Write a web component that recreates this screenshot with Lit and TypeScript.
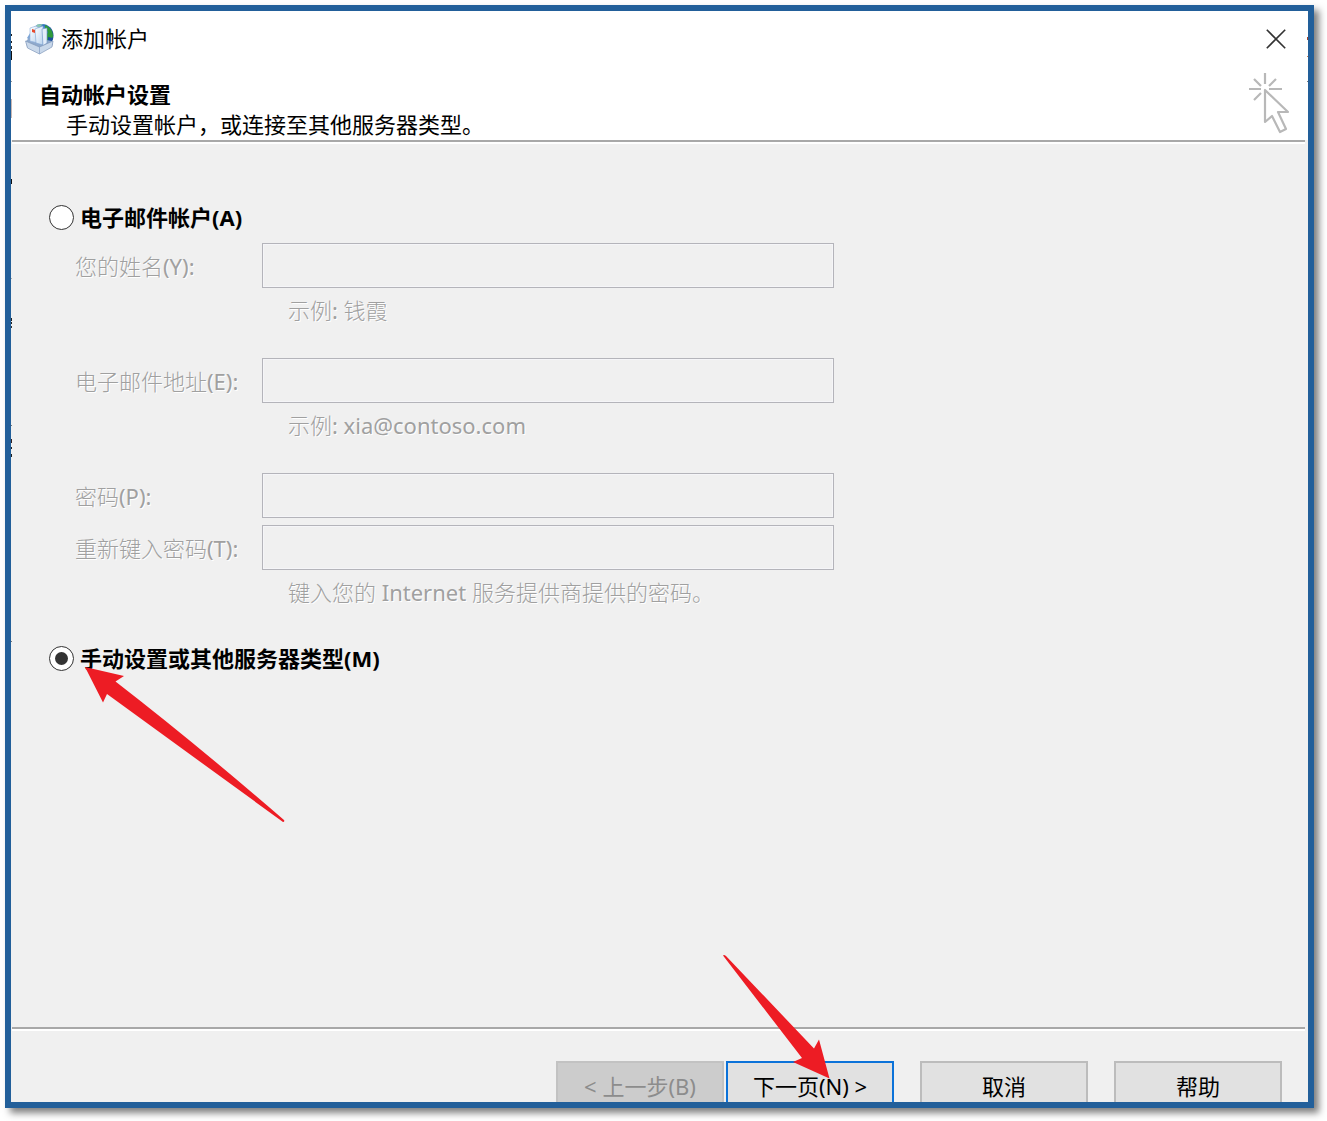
import { LitElement, html, svg, css } from "lit";
import { customElement, state } from "lit/decorators.js";

type Field = { id: string; label: string; type: string; hint?: string };

const FIELDS: Field[] = [
  { id: "name", label: "您的姓名(Y):", type: "text", hint: "示例: 钱霞" },
  { id: "email", label: "电子邮件地址(E):", type: "email", hint: "示例: xia@contoso.com" },
  { id: "password", label: "密码(P):", type: "password" },
  { id: "retype", label: "重新键入密码(T):", type: "password", hint: "键入您的 Internet 服务提供商提供的密码。" },
];

const mailIcon = html`
  <svg class="mail-icon" viewBox="0 0 30 32" width="30" height="32" aria-hidden="true">
    <defs>
      <radialGradient id="globe" cx="0.4" cy="0.35" r="0.7">
        <stop offset="0" stop-color="#9fd0f2" />
        <stop offset="0.5" stop-color="#2f74bd" />
        <stop offset="1" stop-color="#153f86" />
      </radialGradient>
      <linearGradient id="sheet" x1="0" y1="0" x2="1" y2="1">
        <stop offset="0" stop-color="#ffffff" />
        <stop offset="1" stop-color="#b9d3ee" />
      </linearGradient>
    </defs>
    <circle cx="17" cy="12.500" r="11.500" fill="url(#globe)" />
    <path d="M20 2c5 2 8 6 8 11l-2 7-4 0-1-7 2-4-3-3z" fill="#2f9a3a" />
    <path d="M23 14l5 1-2 6-3 1z" fill="#1c4f9c" />
    <path d="M12 1.500l6-.5-3 3-4 1z" fill="#8cc6b0" />
    <path d="M2 15l5-8 3 0-1 14z" fill="#7ea6d6" />
    <path d="M1 18l4-4 22 4 1 4-13 8-13-6z" fill="#8fa9cc" />
    <path d="M5 5l6-2 3 2-1 15-8-2z" fill="url(#sheet)" stroke="#8fb0dc" stroke-width=".6" />
    <path d="M10 6l8-3v19l-7-2z" fill="url(#sheet)" stroke="#7fa3d0" stroke-width=".6" />
    <path d="M17 6l5-1v15l-4 3z" fill="#e4eefa" stroke="#6d93c4" stroke-width=".6" />
    <path d="M7 6l3 1v3l-3-1z" fill="#e8492c" />
    <path d="M.5 18l14 6 13.500-6-1 6-12.500 7-12-6z" fill="#c9d8ea" stroke="#8198ba" stroke-width=".7" />
    <path d="M14.500 24v7" stroke="#8ba3c6" stroke-width=".8" />
  </svg>
`;

const closeIcon = html`
  <svg viewBox="0 0 20 20" width="20" height="20" aria-hidden="true">
    <path d="M.8.800l18.400 18.400M19.200.800L.8 19.200" stroke="#333" stroke-width="1.600" fill="none" />
  </svg>
`;

const clickIcon = html`
  <svg class="click-icon" viewBox="0 0 42 62" width="42" height="62" aria-hidden="true">
    <g fill="none" stroke="#b8b8b8" stroke-width="2.200">
      <path d="M17 1v11M1 17h12M21 17h13M6 7l7 7M28 7l-7 7M6 28l7-7" />
      <path d="M17 18v32l7-6 8 16 6-3-8-17h10z" stroke-linejoin="round" />
    </g>
  </svg>
`;

const radioArrow = html`
  <svg class="arrow arrow-radio" viewBox="0 0 200 156" width="200" height="156" aria-hidden="true">
    <path fill="#ed1c24" d="M0 0L39 9 30.500 14.500Q110 76 199 153Q200 155 198 155L22 27 18 35.500z" />
  </svg>
`;

const nextArrow = html`
  <svg class="arrow arrow-next" viewBox="0 0 107 124" width="107" height="124" aria-hidden="true">
    <path fill="#ed1c24" d="M0 0.500Q1-.5 3 1L91 93.500 96 84.500 106.500 123.500 70 107 79 103z" />
  </svg>
`;

/* Slivers of the window behind, visible along the frame: [y, height, colour]. */
const LEFT_SLIVERS: [number, number, string][] = [
  [23, 2, "#222"], [30, 2, "#222"], [35, 3, "#333"], [40, 9, "#111"], [70, 1, "#999"],
  [88, 19, "#c9b8b4"], [168, 5, "#111"], [267, 1, "#aaa"], [307, 3, "#222"], [311, 2, "#222"],
  [315, 2, "#333"], [414, 1, "#777"], [428, 4, "#322"], [436, 2, "#222"], [443, 3, "#222"], [630, 1, "#777"],
];
const RIGHT_SLIVERS: [number, number, string][] = [
  [26, 3, "#a5432a"], [45, 1, "#d08050"], [70, 1, "#777"],
];
const slivers = (side: string, list: [number, number, string][]) => html`
  <svg class="slivers ${side}" width="1" height="660" aria-hidden="true">
    ${list.map(([y, h, c]) => svg`<rect x="0" y=${y} width="1" height=${h} fill=${c} />`)}
  </svg>
`;

@customElement("app-root")
export class AppRoot extends LitElement {
  @state() private mode: "email" | "manual" = "manual";

  static styles = css`
    :host {
      display: block;
      background: #fff;
      color: #000;
      font: 22px/30px "Noto Sans", "Noto Sans CJK SC", sans-serif;
    }
    * { box-sizing: border-box; }
    .page {
      display: flex;
      min-height: 100vh;
      padding: 5px 13px 13px 5px;
    }
    .dialog {
      position: relative;
      flex: 1;
      display: flex;
      flex-direction: column;
      border: 6px solid #225f9a;
      background: #f0f0f0;
      box-shadow: 5px 5px 7px rgba(0, 0, 0, 0.5);
    }
    .titlebar {
      display: flex;
      align-items: center;
      gap: 6px;
      height: 56px;
      padding: 0 22px 0 14px;
      background: #fff;
    }
    .title { flex: 1; margin: 0; padding-bottom: 2px; font: inherit; }
    .close {
      display: flex;
      padding: 0;
      border: 0;
      background: none;
    }
    .header {
      display: flex;
      justify-content: space-between;
      padding: 0 18px 0 28px;
      background: #fff;
    }
    .heading { margin: 12px 0 0; font: inherit; font-weight: 700; }
    .subtitle { margin: 0; padding: 0 0 1px 27px; }
    .click-icon { margin-top: 5px; }
    .rule {
      height: 4px;
      margin: 0 3px 0 1px;
      border: 0;
      border-top: 2px solid #a8a8a8;
      background: #fff;
    }
    .form { flex: 1; padding: 58px 38px 40px; }
    .choice {
      position: relative;
      display: flex;
      align-items: center;
      gap: 6px;
      height: 30px;
      font-weight: 700;
    }
    .radio {
      appearance: none;
      display: grid;
      place-items: center;
      width: 25px;
      height: 25px;
      margin: 0;
      border: 1px solid #333;
      border-radius: 50%;
      background: #fff;
    }
    .radio:checked::before {
      content: "";
      width: 13px;
      height: 13px;
      border-radius: 50%;
      background: #333;
    }
    .fields {
      min-width: 0;
      margin: 0 0 36px;
      padding: 11px 0 0 26px;
      border: 0;
    }
    .field {
      display: grid;
      grid-template-columns: 187px minmax(0, 572px);
      align-items: center;
      margin-bottom: 7px;
    }
    .field.hinted { margin-bottom: 33px; }
    .field.hinted:last-child { margin-bottom: 0; }
    .input {
      width: 100%;
      height: 45px;
      padding: 0 8px;
      border: 1px solid #b4b4ba;
      background: #f0f0f0;
      box-shadow: inset 0 0 0 1px #f5f5f8;
      font: inherit;
    }
    .label, .hint {
      color: #a0a0a0;
      font-family: "Noto Sans", "Noto Sans CJK SC Light", "Noto Sans CJK SC", sans-serif;
      text-shadow: 1px 1px 0 #fff;
    }
    .hint { grid-column: 2; margin: 7px 0 0; padding-left: 26px; }
    .fields:enabled .label, .fields:enabled .hint { color: #000; text-shadow: none; }
    .fields:enabled .input { background: #fff; }
    .footer {
      display: flex;
      justify-content: flex-end;
      gap: 26px;
      padding: 30px 26px 0;
    }
    .pair { display: flex; gap: 2px; }
    .slot { position: relative; }
    .button {
      display: block;
      width: 168px;
      height: 41px;
      padding: 7px 0 0;
      border: 2px solid #bcbcbc;
      border-bottom: 0;
      background: #e1e1e1;
      color: #000;
      font: inherit;
      line-height: 30px;
    }
    .button:disabled { border-color: #c2c2c2; background: #ccc; color: #8c8c8c; }
    .button.primary { border-color: #0b72d9; }
    .arrow { position: absolute; pointer-events: none; z-index: 1; }
    .arrow-radio { left: 36px; top: 24px; }
    .arrow-next { right: 64px; bottom: 23px; }
    .slivers { position: absolute; top: 0; pointer-events: none; }
    .slivers.left { left: 0; }
    .slivers.right { right: 0; }
  `;

  private pick(mode: "email" | "manual") {
    this.mode = mode;
  }

  render() {
    return html`
      <div class="page">
        <main class="dialog">
          <div class="titlebar">
            ${mailIcon}
            <h1 class="title">添加帐户</h1>
            <button class="close" type="button" aria-label="关闭">${closeIcon}</button>
          </div>
          <header class="header">
            <div>
              <h2 class="heading">自动帐户设置</h2>
              <p class="subtitle">手动设置帐户，或连接至其他服务器类型。</p>
            </div>
            ${clickIcon}
          </header>
          <hr class="rule" />
          <form class="form">
            <div class="choice">
              <input class="radio" type="radio" name="mode" id="mode-email"
                .checked=${this.mode === "email"} @change=${() => this.pick("email")} />
              <label for="mode-email">电子邮件帐户(A)</label>
            </div>
            <fieldset class="fields" ?disabled=${this.mode !== "email"}>
              ${FIELDS.map((f) => html`
                <div class="field ${f.hint ? "hinted" : ""}">
                  <label class="label" for=${f.id}>${f.label}</label>
                  <input class="input" id=${f.id} type=${f.type} />
                  ${f.hint ? html`<p class="hint">${f.hint}</p>` : ""}
                </div>
              `)}
            </fieldset>
            <div class="choice">
              <input class="radio" type="radio" name="mode" id="mode-manual"
                .checked=${this.mode === "manual"} @change=${() => this.pick("manual")} />
              <label for="mode-manual">手动设置或其他服务器类型(M)</label>
              ${radioArrow}
            </div>
          </form>
          <hr class="rule" />
          <footer class="footer">
            <div class="pair">
              <button class="button" type="button" disabled>&lt; 上一步(B)</button>
              <div class="slot">
                <button class="button primary" type="button">下一页(N) &gt;</button>
                ${nextArrow}
              </div>
            </div>
            <button class="button" type="button">取消</button>
            <button class="button" type="button">帮助</button>
          </footer>
          ${slivers("left", LEFT_SLIVERS)} ${slivers("right", RIGHT_SLIVERS)}
        </main>
      </div>
    `;
  }
}
